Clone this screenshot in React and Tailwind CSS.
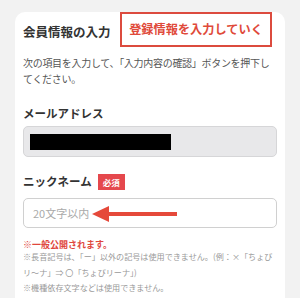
import React from "react";

const jp = { fontFamily: '"Noto Sans CJK JP", "Noto Sans", sans-serif' };

const notes = [
  "※長音記号は、「ー」以外の記号は使用できません。(例：×「ちょび",
  "リ〜ナ」⇒ 〇「ちょびリーナ」)",
  "※機種依存文字などは使用できません。",
];

export default function App() {
  return (
    <div
      className="relative h-[298px] w-[300px] overflow-hidden bg-[#f2f2f2] px-[15px] pt-3"
      style={jp}
    >
      <div className="h-[320px] rounded-[10px] bg-white px-2 pt-[10px]">
        {/* Title */}
        <h1 className="text-[12.5px] font-bold leading-[20px] text-[#333]">
          会員情報の入力
        </h1>

        {/* Description */}
        <p className="mt-[13px] text-[10px] leading-[15.5px] tracking-[-0.3px] text-[#555]">
          <span className="whitespace-nowrap">
            次の項目を入力して、「入力内容の確認」ボタンを押下し
          </span>
          <br />
          てください。
        </p>

        {/* Email */}
        <div className="mt-[18px] text-[11.5px] font-bold leading-[18px] text-[#333]">
          メールアドレス
        </div>
        <div className="mt-1 flex h-[31px] items-center rounded-[5px] border border-[#d6d6d8] bg-[#e8e8ea] px-[6px]">
          <div className="h-4 w-[141px] bg-black" />
        </div>

        {/* Nickname */}
        <div className="mt-4 flex h-[18px] items-center gap-[6px]">
          <span className="text-[11.5px] font-bold text-[#333]">ニックネーム</span>
          <span className="flex h-4 w-[27px] items-center justify-center bg-[#e5484d] text-[8.5px] font-bold text-white">
            必須
          </span>
        </div>
        <div className="relative mt-[7px] flex h-[30px] items-center rounded-[5px] border border-[#d0d0d0] bg-white pl-[9px]">
          <span className="text-[11px] text-[#aaa]">20文字以内</span>
          {/* annotation arrow */}
          <svg
            className="absolute left-[68px] top-[6px]"
            width="86"
            height="18"
            viewBox="0 0 86 18"
          >
            <polygon points="0,9 17,1 17,17" fill="#e5493a" />
            <rect x="15" y="7" width="70" height="4" fill="#e5493a" />
          </svg>
        </div>

        {/* Notes */}
        <p className="mt-[13px] text-[9px] font-bold leading-[8px] text-[#e0473d]">
          ※一般公開されます。
        </p>
        <div className="text-[8.1px] leading-[15.5px] text-[#999]">
          {notes.map((n) => (
            <div key={n} className="whitespace-nowrap">
              {n}
            </div>
          ))}
        </div>
      </div>

      {/* annotation box */}
      <div className="absolute left-[120px] top-3 flex h-[35px] w-[152px] items-center justify-center border-2 border-[#dc4b3e] bg-white">
        <span className="text-[12.2px] font-bold text-[#e04a3a]">登録情報を入力していく</span>
      </div>
    </div>
  );
}
